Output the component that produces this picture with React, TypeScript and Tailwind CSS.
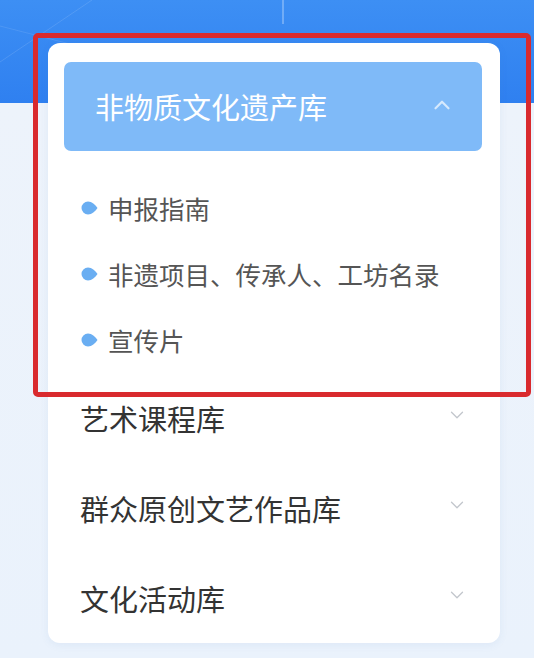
import { ChevronDown, ChevronUp } from 'lucide-react'

const SUB_ITEMS = ['申报指南', '非遗项目、传承人、工坊名录', '宣传片']
const LIBRARIES = ['艺术课程库', '群众原创文艺作品库', '文化活动库']

function Bullet() {
  return (
    <svg width="17" height="14" viewBox="0 0 17 14" className="shrink-0">
      <path d="M7 0.5 C11 0.5 14 3.5 16.5 7 C14 10.5 11 13.5 7 13.5 A6.5 6.5 0 0 1 7 0.5 Z" fill="#6aaef2" />
    </svg>
  )
}

function TopDecor() {
  return (
    <svg width="534" height="103" className="absolute left-0 top-0" aria-hidden="true">
      <line x1="283" y1="0" x2="283" y2="24" stroke="#ffffff" strokeOpacity="0.55" strokeWidth="1" />
      <line x1="0" y1="62" x2="92" y2="0" stroke="#ffffff" strokeOpacity="0.12" strokeWidth="1" />
      <line x1="0" y1="26" x2="70" y2="44" stroke="#ffffff" strokeOpacity="0.1" strokeWidth="1" />
    </svg>
  )
}

export default function App() {
  return (
    <div
      className="relative w-[534px] h-[658px] overflow-hidden bg-[linear-gradient(180deg,#3d8ff4_0px,#2f80f0_103px,#edf3fb_103px,#eaf2fc_658px)]"
      style={{ fontFamily: '"Noto Sans CJK SC", "Noto Sans", sans-serif' }}
    >
      <TopDecor />

      <div className="relative ml-[48px] mt-[43px] w-[452px] h-[600px] rounded-[12px] bg-white shadow-[0_2px_8px_rgba(60,110,180,0.08)] px-4 pt-[19px]">
        <div className="w-[418px] h-[89px] rounded-[7px] bg-[#7fbaf8] flex items-center justify-between pl-[31px] pr-[27px]">
          <span className="text-[29px] leading-none text-white">非物质文化遗产库</span>
          <ChevronUp size={26} strokeWidth={2} className="text-[#d6e9fd] -mt-[3px]" />
        </div>

        <div className="mt-[24px] flex flex-col">
          {SUB_ITEMS.map((s) => (
            <div key={s} className="h-[66px] flex items-center pl-[17px] gap-[10px]">
              <Bullet />
              <span className="text-[25.5px] leading-none text-[#555555]">{s}</span>
            </div>
          ))}
        </div>

        <div className="flex flex-col">
          {LIBRARIES.map((l) => (
            <div key={l} className="h-[90px] flex items-center justify-between pl-4 pr-[16px]">
              <span className="text-[29px] leading-none text-[#333333]">{l}</span>
              <ChevronDown size={22} strokeWidth={1.4} className="text-[#c2c6cc] -mt-[6px]" />
            </div>
          ))}
        </div>
      </div>

      <div className="absolute left-[33px] top-[33px] w-[498px] h-[364px] rounded-[5px] border-[5px] border-[#d92a2e] pointer-events-none" />
    </div>
  )
}
